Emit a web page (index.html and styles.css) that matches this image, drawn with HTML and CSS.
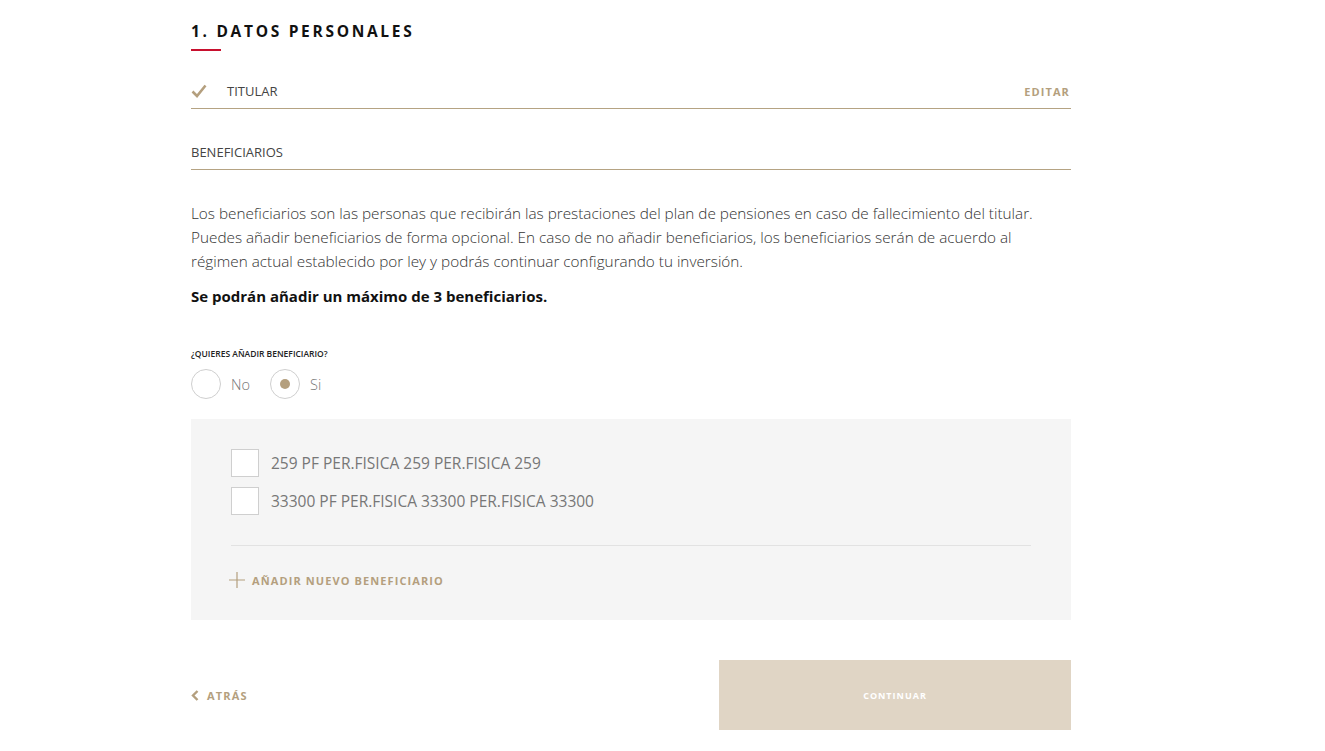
FILE: index.html
```html
<!DOCTYPE html>
<html lang="es">
<head>
<meta charset="utf-8">
<link rel="stylesheet" href="styles.css">
</head>
<body>
<main class="page">
  <h1 class="title">1. DATOS PERSONALES</h1>
  <div class="row row-titular">
    <div class="row-left">
      <svg class="check" width="16" height="14" viewBox="0 0 16 14"><path d="M1.5 7.5 L6 12 L14.5 1.5" fill="none" stroke="#b49f7e" stroke-width="2.6"/></svg>
      <span class="row-label">TITULAR</span>
    </div>
    <a class="link-edit">EDITAR</a>
  </div>
  <div class="row row-benef">
    <span class="row-label plain">BENEFICIARIOS</span>
  </div>
  <p class="desc">Los beneficiarios son las personas que recibirán las prestaciones del plan de pensiones en caso de fallecimiento del titular. Puedes añadir beneficiarios de forma opcional. En caso de no añadir beneficiarios, los beneficiarios serán de acuerdo al régimen actual establecido por ley y podrás continuar configurando tu inversión.</p>
  <p class="max">Se podrán añadir un máximo de 3 beneficiarios.</p>
  <div class="question">¿QUIERES AÑADIR BENEFICIARIO?</div>
  <div class="radios">
    <label class="radio"><span class="circle"></span><span class="rtext">No</span></label>
    <label class="radio"><span class="circle on"><span class="dot"></span></span><span class="rtext">Si</span></label>
  </div>
  <section class="box">
    <label class="cb"><span class="square"></span><span class="cbtext">259 PF PER.FISICA 259 PER.FISICA 259</span></label>
    <label class="cb"><span class="square"></span><span class="cbtext">33300 PF PER.FISICA 33300 PER.FISICA 33300</span></label>
    <div class="sep"></div>
    <a class="add">
      <svg width="16" height="16" viewBox="0 0 16 16"><path d="M8 0 V16 M0 8 H16" stroke="#b49f7e" stroke-width="1.2" fill="none"/></svg>
      <span>AÑADIR NUEVO BENEFICIARIO</span>
    </a>
  </section>
  <div class="footer">
    <a class="back">
      <svg width="8" height="11" viewBox="0 0 8 11"><path d="M6.5 1 L2 5.5 L6.5 10" fill="none" stroke="#b49f7e" stroke-width="2.4"/></svg>
      <span>ATRÁS</span>
    </a>
    <button class="continue">CONTINUAR</button>
  </div>
</main>
</body>
</html>
```
FILE: styles.css
```css
* { box-sizing: border-box; }
html, body { margin: 0; padding: 0; background: #fff; }
body { font-family: "Open Sans", "Liberation Sans", sans-serif; color: #333; }
.page { width: 880px; margin-left: 191px; padding-top: 21px; }
.title {
  margin: 0; font-size: 15.5px; font-weight: 700; letter-spacing: 2.7px;
  color: #111; line-height: 20px; padding-bottom: 8px; position: relative;
}
.title::after {
  content: ""; position: absolute; left: 0; bottom: -2px; width: 30px; height: 2px; background: #c8102e;
}
.row { display: flex; align-items: center; justify-content: space-between; border-bottom: 1px solid #b5a383; }
.row-titular { margin-top: 30px; height: 30px; padding-bottom: 5px; }
.row-left { display: flex; align-items: center; }
.check { margin-right: 20px; }
.row-label { font-size: 13px; color: #444; }
.link-edit { font-size: 11px; font-weight: 700; letter-spacing: 1.1px; color: #b49f7e; margin-right: 1px; }
.row-benef { margin-top: 31px; height: 30px; padding-bottom: 5px; }
.desc {
  margin: 31px 0 0; font-size: 15.3px; line-height: 24px; font-weight: 300; color: #333;
}
.max { margin: 11px 0 0; font-size: 15px; font-weight: 700; color: #111; line-height: 24px; }
.question { margin-top: 40px; font-size: 8.5px; font-weight: 600; color: #222; line-height: 12px; }
.radios { display: flex; gap: 20px; margin-top: 9px; }
.radio { display: flex; align-items: center; }
.circle {
  width: 30px; height: 30px; border-radius: 50%; border: 1px solid #cfcfcf; background: #fff;
  display: flex; align-items: center; justify-content: center;
}
.dot { width: 10px; height: 10px; border-radius: 50%; background: #b49f7e; }
.rtext { margin-left: 10px; font-size: 14.5px; font-weight: 300; color: #777; }
.box { margin-top: 20px; background: #f5f5f5; padding: 30px 40px 30px; height: 201px; }
.cb { display: flex; align-items: center; margin-bottom: 10px; }
.square { width: 28px; height: 28px; background: #fff; border: 1px solid #cfcfcf; }
.cbtext { margin-left: 12px; font-size: 15.5px; color: #777; }
.sep { height: 1px; background: #e2e2e2; margin-top: 30px; }
.add { display: flex; align-items: center; margin-top: 26px; margin-left: -2px; }
.add span { margin-left: 7px; font-size: 11px; font-weight: 700; letter-spacing: 1.1px; color: #b49f7e; }
.footer { display: flex; justify-content: space-between; align-items: center; margin-top: 40px; }
.back { display: flex; align-items: center; }
.back span { margin-left: 8px; font-size: 11px; font-weight: 700; letter-spacing: 1.2px; color: #b49f7e; }
.continue {
  width: 352px; height: 70px; border: 0; background: #e0d5c5; color: #fff;
  font-family: "Open Sans", sans-serif; font-size: 9px; font-weight: 700; letter-spacing: 1px;
}
```
